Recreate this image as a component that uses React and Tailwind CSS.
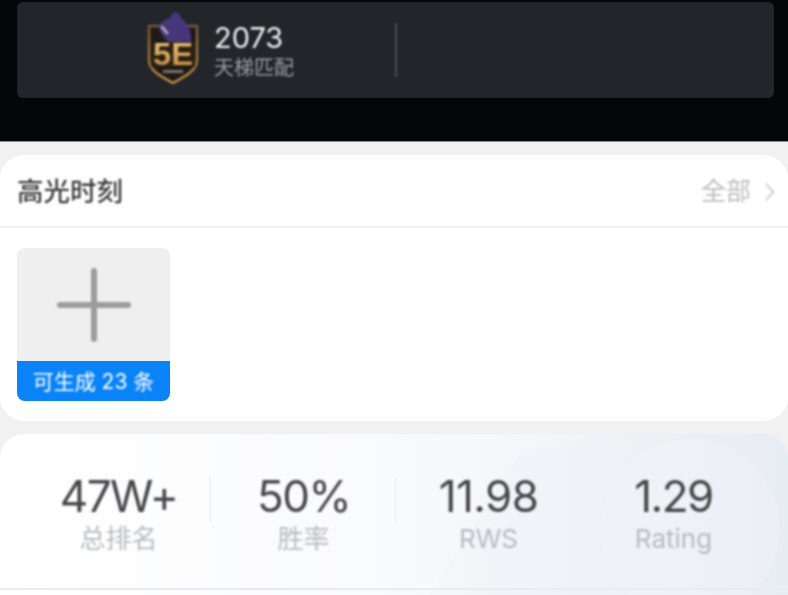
import React from "react";

const sans = "font-['Inter','Noto_Sans_CJK_SC',sans-serif]";

function Logo() {
  return (
    <svg width="52" height="73" viewBox="0 0 52 73" className="shrink-0 mb-[4px] blur-[0.8px]">
      <defs>
        <linearGradient id="gold" x1="0" y1="0" x2="0" y2="1">
          <stop offset="0" stopColor="#75593a" />
          <stop offset="1" stopColor="#b98a45" />
        </linearGradient>
        <linearGradient id="letters" x1="0" y1="0" x2="0" y2="1">
          <stop offset="0" stopColor="#efc884" />
          <stop offset="1" stopColor="#b98438" />
        </linearGradient>
      </defs>
      <path d="M2 14 L50 14 L50 48 C50 60 34 66 26 71 C18 66 2 60 2 48 Z" fill="#1f1a16" stroke="url(#gold)" strokeWidth="2.5" strokeLinejoin="round" />
      <path d="M12 14 C15 9 20 7 24 5 L26 0 L32 1 L34 6 C39 10 43 15 44 24 L44 30 L21 30 C18 26 12 21 12 14 Z" fill="#47367a" />
      <path d="M15 15 L20 21" stroke="#a8a1b8" strokeWidth="3" strokeLinecap="round" />
      <rect x="4" y="30" width="44" height="25" fill="#2a2013" />
      <text x="26" y="53" textAnchor="middle" fontFamily="Liberation Sans" fontWeight="700" fontSize="31" fill="url(#letters)" textLength="40" lengthAdjust="spacingAndGlyphs">5E</text>
      <rect x="16" y="58" width="20" height="3" fill="#8f887e" opacity="0.8" />
    </svg>
  );
}

function Stat({ value, label, divider, wide }) {
  return (
    <div className="relative flex flex-col items-center">
      <div className={`text-[44px] leading-[48px] font-normal text-[#47474a] blur-[0.8px] ${wide ? "tracking-[-0.6px]" : "tracking-[-1.5px]"}`}>{value}</div>
      <div className="text-[26px] leading-[32px] mt-[3px] text-[#b8bbc0] blur-[0.8px]">{label}</div>
      {divider && <div className="absolute right-[0px] top-[5px] w-px h-[46px] bg-[#eceef1]" />}
    </div>
  );
}

export default function App() {
  return (
    <div className={`${sans} w-[788px] h-[595px] overflow-hidden bg-[#f1f1f1]`}>
      <section className="h-[142px] bg-[#04060a] pl-[17px] pr-[14px] pt-[2px] border-b border-[#8d8d8d]">
        <div className="h-[96px] rounded-[6px] bg-[#22252a] flex items-center pl-[130px]">
          <Logo />
          <div className="ml-[15px] w-[181px] mt-[2px] blur-[0.8px]">
            <div className="text-[29px] leading-[34px] text-[#eeeff0]">2073</div>
            <div className="text-[20px] leading-[26px] text-[#9a9da2]">天梯匹配</div>
          </div>
          <div className="w-[2px] h-[54px] bg-[#4b4e52] blur-[0.8px]" />
        </div>
      </section>

      <section className="mt-[13px] h-[266px] rounded-[24px] bg-white">
        <div className="h-[73px] pl-[17px] pr-[13px] pt-[2px] flex items-center justify-between border-b-2 border-[#f0f0f0]">
          <div className="text-[26.5px] font-medium text-[#3c3c3e] blur-[0.8px]">高光时刻</div>
          <div className="flex items-center gap-[14px] blur-[0.8px]">
            <span className="text-[25px] text-[#bcbcbc]">全部</span>
            <svg width="10" height="18" viewBox="0 0 10 18" fill="none" stroke="#c4c4c4" strokeWidth="1.8" strokeLinecap="round" strokeLinejoin="round">
              <path d="M1.5 1.5 L8.5 9 L1.5 16.5" />
            </svg>
          </div>
        </div>
        <div className="pl-[17px] pt-[20px]">
          <div className="w-[153px] h-[153px] rounded-[8px] overflow-hidden bg-[#efefef] flex flex-col">
            <div className="flex-1 flex items-center justify-center">
              <svg width="74" height="74" viewBox="0 0 74 74" stroke="#9c9c9c" strokeWidth="6" strokeLinecap="round" className="blur-[0.8px]">
                <path d="M37 3 V71 M3 37 H71" />
              </svg>
            </div>
            <div className="h-[40px] pt-[2px] bg-[#0a82f8] text-white text-[21px] flex items-center justify-center"><span className="blur-[0.8px]">可生成 23 条</span></div>
          </div>
        </div>
      </section>

      <section className="relative mt-[13px] h-[200px] rounded-[24px] overflow-hidden bg-gradient-to-r from-white via-[#f9fafc] to-[#e9edf4]">
        <svg className="absolute inset-0" width="788" height="200" viewBox="0 0 788 200">
          <path d="M430 160 L520 20 L600 0 L788 0 L788 200 L470 200 Z" fill="#e3e9f2" opacity="0.15" />
          <circle cx="690" cy="95" r="90" fill="#f6f8fb" opacity="0.25" />
        </svg>
        <div className="relative pl-[26px] pr-[22px] pt-[38px] grid grid-cols-4">
          <Stat value="47W+" label="总排名" divider />
          <Stat value="50%" label="胜率" divider />
          <Stat value="11.98" label="RWS" wide />
          <Stat value="1.29" label="Rating" />
        </div>
        <div className="absolute left-0 right-0 top-[154px] h-[2px] bg-[#e9ebef]" />
      </section>
    </div>
  );
}
